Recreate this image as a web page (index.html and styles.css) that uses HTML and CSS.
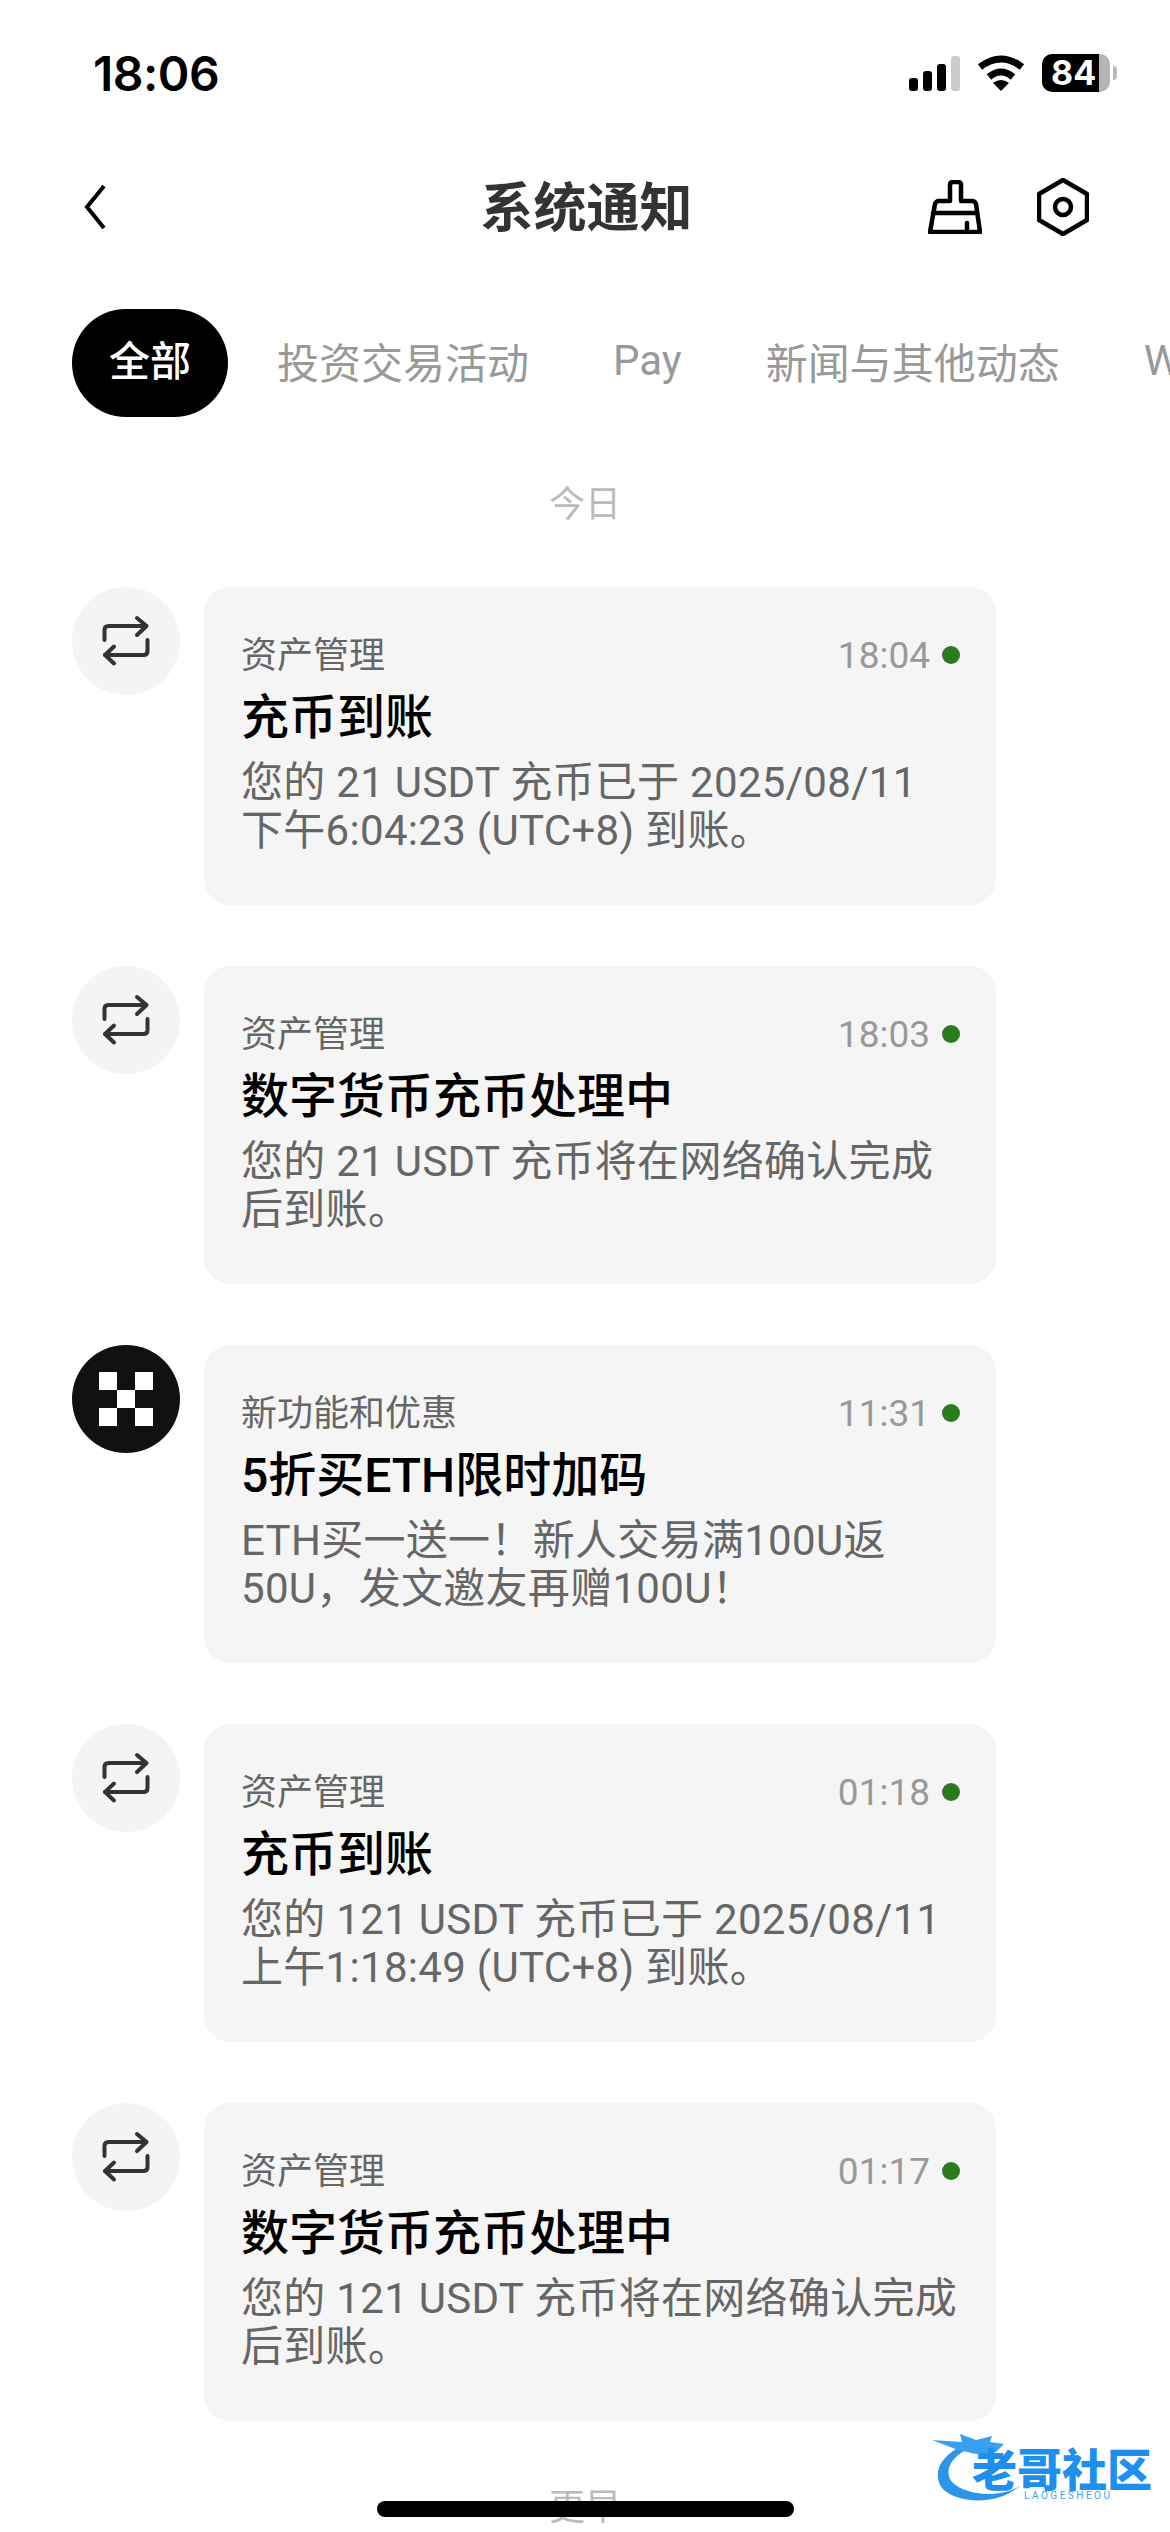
FILE: index.html
```html
<!DOCTYPE html>
<html lang="zh-CN">
<head>
  <meta charset="UTF-8">
  <meta name="viewport" content="width=device-width, initial-scale=1">
  <title>系统通知</title>
  <link rel="stylesheet" href="styles.css">
</head>
<body>

  <div class="page">
    <div class="status">
      <div class="clock">18:06</div>
      <div class="status-icons">
        <svg class="signal" width="51" height="35" viewBox="0 0 51 35">
          <rect x="0" y="22" width="9" height="13" rx="3" fill="#000"/>
          <rect x="14" y="15" width="9" height="20" rx="3" fill="#000"/>
          <rect x="28" y="8" width="9" height="27" rx="3" fill="#000"/>
          <rect x="42" y="0" width="9" height="35" rx="3" fill="#ccc"/>
        </svg>
        <svg class="wifi" width="48" height="36" viewBox="0 0 48 36">
          <path d="M3 12Q24 -4 45 12" fill="none" stroke="#000" stroke-width="7"/>
          <path d="M12 22Q24 12 36 22" fill="none" stroke="#000" stroke-width="7"/>
          <path d="M16 28Q24 22 32 28L24 36Z" fill="#000"/>
        </svg>
        <div class="battery">84</div>
      </div>
    </div>

    <div class="nav">
      <svg class="back" width="22" height="46" viewBox="0 0 22 46">
        <path d="M20 2L3 23L20 44" fill="none" stroke="#000" stroke-width="4"/>
      </svg>
      <div class="nav-title">系统通知</div>
      <div class="nav-icons">
        <svg width="54" height="54" viewBox="0 0 54 54">
          <path d="M2 52L7 24Q8 21 11 21H22V5Q22 2 25 2H30Q33 2 33 5V21H44Q47 21 48 24L52 52Z" fill="none" stroke="#000" stroke-width="4.5" stroke-linejoin="round"/>
          <path d="M5 33H49M39 52V43" fill="none" stroke="#000" stroke-width="4.5" stroke-linecap="round"/>
        </svg>
        <svg width="52" height="58" viewBox="0 0 52 58">
          <path d="M26 2L50 16V42L26 56L2 42V16Z" fill="none" stroke="#000" stroke-width="4.5" stroke-linejoin="round"/>
          <circle cx="26" cy="29" r="8" fill="none" stroke="#000" stroke-width="4.5"/>
        </svg>
      </div>
    </div>

    <div class="tabs">
      <div class="tab tab-active">全部</div>
      <div class="tab">投资交易活动</div>
      <div class="tab">Pay</div>
      <div class="tab">新闻与其他动态</div>
      <div class="tab">Web3</div>
    </div>

    <div class="day">今日</div>

    <div class="list">
      <div class="row">
        <div class="avatar">
          <svg width="54" height="54" viewBox="0 0 54 54"><use href="#repeat"/></svg>
        </div>
        <div class="card">
          <div class="card-top">
            <div class="cat">资产管理</div>
            <div class="time">18:04</div>
            <div class="dot"></div>
          </div>
          <div class="card-title">充币到账</div>
          <div class="desc">您的 21 USDT 充币已于 2025/08/11<br>下午6:04:23 (UTC+8) 到账。</div>
        </div>
      </div>

      <div class="row">
        <div class="avatar">
          <svg width="54" height="54" viewBox="0 0 54 54"><use href="#repeat"/></svg>
        </div>
        <div class="card">
          <div class="card-top">
            <div class="cat">资产管理</div>
            <div class="time">18:03</div>
            <div class="dot"></div>
          </div>
          <div class="card-title">数字货币充币处理中</div>
          <div class="desc">您的 21 USDT 充币将在网络确认完成<br>后到账。</div>
        </div>
      </div>

      <div class="row">
        <div class="avatar avatar-dark">
          <svg width="54" height="54" viewBox="0 0 54 54">
            <rect x="0" y="0" width="18" height="18" fill="#fff"/>
            <rect x="36" y="0" width="18" height="18" fill="#fff"/>
            <rect x="18" y="18" width="18" height="18" fill="#fff"/>
            <rect x="0" y="36" width="18" height="18" fill="#fff"/>
            <rect x="36" y="36" width="18" height="18" fill="#fff"/>
          </svg>
        </div>
        <div class="card">
          <div class="card-top">
            <div class="cat">新功能和优惠</div>
            <div class="time">11:31</div>
            <div class="dot"></div>
          </div>
          <div class="card-title">5折买ETH限时加码</div>
          <div class="desc">ETH买一送一！新人交易满100U返<br>50U，发文邀友再赠100U！</div>
        </div>
      </div>

      <div class="row">
        <div class="avatar">
          <svg width="54" height="54" viewBox="0 0 54 54"><use href="#repeat"/></svg>
        </div>
        <div class="card">
          <div class="card-top">
            <div class="cat">资产管理</div>
            <div class="time">01:18</div>
            <div class="dot"></div>
          </div>
          <div class="card-title">充币到账</div>
          <div class="desc">您的 121 USDT 充币已于 2025/08/11<br>上午1:18:49 (UTC+8) 到账。</div>
        </div>
      </div>

      <div class="row">
        <div class="avatar">
          <svg width="54" height="54" viewBox="0 0 54 54"><use href="#repeat"/></svg>
        </div>
        <div class="card">
          <div class="card-top">
            <div class="cat">资产管理</div>
            <div class="time">01:17</div>
            <div class="dot"></div>
          </div>
          <div class="card-title">数字货币充币处理中</div>
          <div class="desc">您的 121 USDT 充币将在网络确认完成<br>后到账。</div>
        </div>
      </div>
    </div>

    <div class="day day-earlier">更早</div>

    <div class="home-bar"></div>

    <div class="watermark">
      <svg class="dragon" width="100" height="78" viewBox="0 0 100 78">
        <path d="M30 16C8 26 0 44 10 58C22 72 62 78 88 56C68 68 34 66 20 52C12 42 18 28 34 20Z" fill="#2b95ea"/>
        <path d="M0 10L30 12L28 4L44 10L60 6L58 12L72 14L64 22L44 24L26 20Z" fill="#3b9ff0"/>
      </svg>
      <div class="wm-name">老哥社区</div>
      <div class="wm-sub">LAOGESHEOU</div>
    </div>
  </div>

  <svg class="defs" width="0" height="0">
    <defs>
      <g id="repeat" fill="none" stroke="#333" stroke-width="4" stroke-linecap="round" stroke-linejoin="round">
        <path d="M5.5 26V16Q5.5 12 9.5 12H47"/>
        <path d="M38 4L47.5 12L38 21"/>
        <path d="M48.5 26V37Q48.5 41 44.5 41H6"/>
        <path d="M15 32.5L6 41L15 49.5"/>
      </g>
    </defs>
  </svg>

</body>
</html>
```

FILE: styles.css
```css
* {
  box-sizing: border-box;
}
body {
  margin: 0;
  background: #fff;
  font-family: Roboto, "Noto Sans CJK SC", sans-serif;
  color: #000;
}
.page {
  position: relative;
  width: 1170px;
  height: 2532px;
  overflow: hidden;
}
.defs {
  position: absolute;
}

/* status bar */
.status {
  display: flex;
  justify-content: space-between;
  align-items: center;
  height: 144px;
  padding: 2px 60px 0 93px;
}
.clock {
  font-family: Inter, sans-serif;
  font-size: 48px;
  font-weight: 600;
  letter-spacing: -0.5px;
}
.status-icons {
  display: flex;
  align-items: center;
  gap: 17px;
}
.battery {
  position: relative;
  width: 68px;
  height: 38px;
  border-radius: 10px;
  background: linear-gradient(to right, #000 57px, #b5b5b5 57px);
  color: #fff;
  font-family: Inter, sans-serif;
  font-size: 34px;
  font-weight: 700;
  line-height: 38px;
  padding-left: 9px;
}
.battery::after {
  content: "";
  position: absolute;
  left: 71px;
  top: 12px;
  width: 4px;
  height: 14px;
  background: #bbb;
  border-radius: 0 4px 4px 0;
}

/* nav */
.nav {
  display: grid;
  grid-template-columns: 1fr auto 1fr;
  align-items: center;
  height: 126px;
  padding: 0 81px 0 84px;
}
.nav-title {
  padding-bottom: 6px;
  font-size: 53px;
  font-weight: 700;
  color: #333;
}
.nav-icons {
  display: flex;
  justify-content: flex-end;
  align-items: center;
  gap: 55px;
}

/* tabs */
.tabs {
  display: flex;
  align-items: center;
  gap: 84px;
  margin-top: 39px;
  padding-left: 72px;
  white-space: nowrap;
}
.tab {
  flex: none;
  padding-bottom: 6px;
  font-size: 42px;
  color: #999;
}
.tab-active {
  width: 156px;
  height: 108px;
  margin-right: -35px;
  padding-bottom: 0;
  border-radius: 54px;
  background: #000;
  color: #fff;
  font-size: 41px;
  font-weight: 500;
  line-height: 107px;
  text-align: center;
}

.day {
  margin-top: 63px;
  text-align: center;
  font-size: 36px;
  line-height: 50px;
  color: #bbb;
}
.day-earlier {
  margin-top: 62px;
}

/* notifications */
.list {
  display: flex;
  flex-direction: column;
  gap: 61px;
  margin-top: 57px;
  padding-left: 72px;
}
.row {
  display: flex;
  align-items: flex-start;
  gap: 24px;
}
.avatar {
  display: flex;
  align-items: center;
  justify-content: center;
  flex: none;
  width: 108px;
  height: 108px;
  border-radius: 50%;
  background: #f4f4f4;
}
.avatar-dark {
  background: #111;
}
.card {
  width: 792px;
  padding: 43px 36px 50px 37px;
  border-radius: 26px;
  background: #f5f5f5;
}
.card-top {
  display: flex;
  align-items: center;
  height: 50px;
}
.cat {
  flex: 1;
  padding-bottom: 6px;
  font-size: 36px;
  color: #666;
}
.time {
  font-size: 37px;
  color: #999;
}
.dot {
  width: 18px;
  height: 18px;
  margin-left: 12px;
  border-radius: 50%;
  background: #2c7a1e;
}
.card-title {
  margin-top: 7px;
  font-size: 48px;
  font-weight: 500;
  line-height: 62px;
  color: #000;
}
.desc {
  margin-top: 10px;
  font-size: 42px;
  line-height: 48px;
  letter-spacing: 0.3px;
  color: #666;
  white-space: nowrap;
}

/* overlays */
.home-bar {
  position: absolute;
  left: 377px;
  top: 2501px;
  width: 417px;
  height: 16px;
  border-radius: 8px;
  background: #000;
}
.watermark {
  position: absolute;
  left: 932px;
  top: 2430px;
  width: 222px;
  height: 78px;
}
.dragon {
  position: absolute;
  left: 0;
  top: 0;
}
.wm-name {
  position: absolute;
  left: 40px;
  top: 19px;
  font-size: 45px;
  font-weight: 900;
  line-height: 46px;
  color: #1d8fee;
  white-space: nowrap;
}
.wm-sub {
  position: absolute;
  left: 92px;
  top: 60px;
  font-size: 10px;
  line-height: 12px;
  letter-spacing: 2.5px;
  color: #3b9ff0;
}
```
